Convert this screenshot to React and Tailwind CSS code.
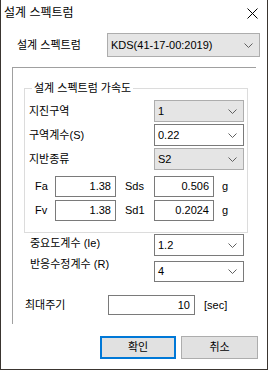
function Chevron() {
  return (
    <svg width="9" height="5" viewBox="0 0 9 5" className="shrink-0">
      <polyline points="0.5,0.5 4.5,4.5 8.5,0.5" fill="none" stroke="#606060" strokeWidth="1" />
    </svg>
  )
}

function Combo({ value, editable, className }) {
  return (
    <div
      className={`flex items-center justify-between pl-[3px] pr-[6px] text-[11px] text-black ${
        editable ? 'border border-[#7a7a7a] bg-white' : 'border border-[#adadad] bg-[#e5e5e5]'
      } ${className}`}
    >
      <span>{value}</span>
      <Chevron />
    </div>
  )
}

function Field({ value, className }) {
  return (
    <div className={`flex items-center justify-end border border-[#7a7a7a] bg-white pr-[4px] text-[11px] ${className}`}>
      {value}
    </div>
  )
}

export default function App() {
  return (
    <div className="h-[370px] w-[268px] border-x border-b border-[#3a3530] bg-white font-['Liberation_Sans','Noto_Sans_CJK_KR',sans-serif] text-[11px] leading-[15px] text-black">
      {/* title bar */}
      <div className="flex h-[26px] items-center justify-between pl-[3px] pr-[9px]">
        <span className="text-[12px]">설계 스펙트럼</span>
        <svg width="11" height="11" viewBox="0 0 11 11">
          <path d="M0.5 0.5 L10.5 10.5 M10.5 0.5 L0.5 10.5" stroke="#000" strokeWidth="1" />
        </svg>
      </div>

      <div className="mt-[7px] flex h-[24px] items-center">
        <span className="w-[106px] pl-[16px]">설계 스펙트럼</span>
        <Combo value="KDS(41-17-00:2019)" className="h-[24px] w-[153px]" />
      </div>

      {/* outer panel */}
      <div className="ml-[11px] mt-[10px] h-[257px] w-[244px] border-l border-t border-[#a0a0a0]">
        <div className="relative ml-[11px] mt-[20px] h-[145px] w-[224px] border border-[#dcdcdc]">
          <span className="absolute -top-[8px] left-[7px] bg-white px-[2px]">설계 스펙트럼 가속도</span>

          <div className="flex flex-col gap-[2px] pt-[11px]">
            <div className="flex h-[22px] items-center">
              <span className="w-[129px] pl-[4px]">지진구역</span>
              <Combo value="1" className="h-[22px] w-[90px]" />
            </div>
            <div className="flex h-[22px] items-center">
              <span className="w-[129px] pl-[4px]">구역계수(S)</span>
              <Combo value="0.22" editable className="h-[22px] w-[90px]" />
            </div>
            <div className="flex h-[22px] items-center">
              <span className="w-[129px] pl-[4px]">지반종류</span>
              <Combo value="S2" className="h-[22px] w-[90px]" />
            </div>
          </div>

          <div className="mt-[6px] flex flex-col gap-[3px]">
            <div className="flex h-[21px] items-center">
              <span className="w-[30px] pl-[10px]">Fa</span>
              <Field value="1.38" className="h-[21px] w-[61px]" />
              <span className="w-[38px] pl-[9px]">Sds</span>
              <Field value="0.506" className="h-[21px] w-[60px]" />
              <span className="ml-[8px]">g</span>
            </div>
            <div className="flex h-[21px] items-center">
              <span className="w-[30px] pl-[10px]">Fv</span>
              <Field value="1.38" className="h-[21px] w-[61px]" />
              <span className="w-[38px] pl-[9px]">Sd1</span>
              <Field value="0.2024" className="h-[21px] w-[60px]" />
              <span className="ml-[8px]">g</span>
            </div>
          </div>
        </div>

        <div className="flex">
          <div className="flex w-[141px] flex-col pl-[17px]">
            <span className="h-[21px] leading-[20px]">중요도계수 (Ie)</span>
            <span className="h-[21px] leading-[20px]">반응수정계수 (R)</span>
          </div>
          <div className="flex flex-col">
            <Combo value="1.2" editable className="mt-[1px] h-[22px] w-[90px]" />
            <Combo value="4" editable className="mt-[5px] h-[21px] w-[90px]" />
          </div>
        </div>

        <div className="mt-[13px] flex h-[20px] items-center">
          <span className="w-[95px] pl-[12px]">최대주기</span>
          <Field value="10" className="h-[20px] w-[87px]" />
          <span className="ml-[9px]">[sec]</span>
        </div>
      </div>

      <div className="mt-[12px] flex pl-[99px]">
        <button className="h-[23px] w-[76px] border-2 border-[#0078d7] bg-[#e1e1e1] text-[11px]">확인</button>
        <button className="ml-[5px] h-[23px] w-[77px] border border-[#adadad] bg-[#e1e1e1] text-[11px]">취소</button>
      </div>
    </div>
  )
}
